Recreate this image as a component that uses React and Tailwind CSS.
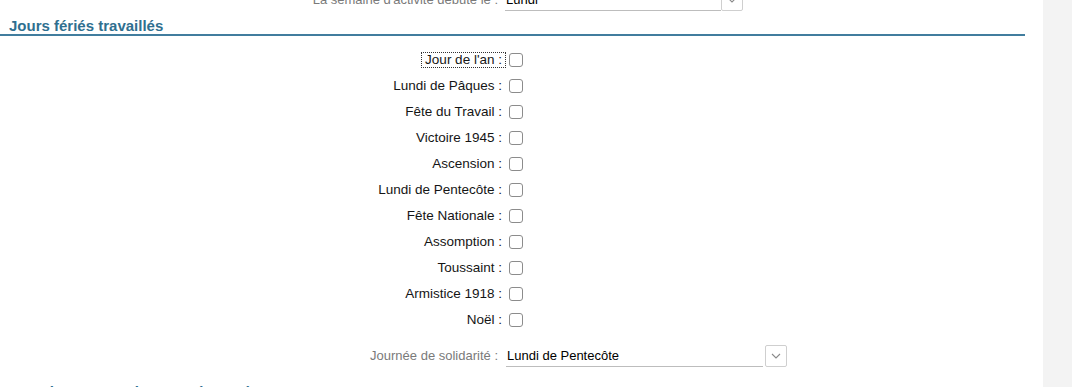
import React from 'react';

const font = { fontFamily: '"Liberation Sans", Arial, sans-serif' };

const holidays = [
  'Jour de l\'an',
  'Lundi de Pâques',
  'Fête du Travail',
  'Victoire 1945',
  'Ascension',
  'Lundi de Pentecôte',
  'Fête Nationale',
  'Assomption',
  'Toussaint',
  'Armistice 1918',
  'Noël',
];

// Chevron for the combo button
function Chevron() {
  return (
    <svg width="10" height="6" viewBox="0 0 10 6" fill="none">
      <path d="M1 1l4 4 4-4" stroke="#8a8a8a" strokeWidth="1.1" />
    </svg>
  );
}

// Select with underline + separate dropdown button
function ComboField({ value, width, gap }) {
  return (
    <div className="flex items-end">
      <div className={`${width} h-[21px] border-b border-[#bdbdbd] pl-[1px] text-[13px] leading-[20px] text-black`}>
        {value}
      </div>
      <div className={`${gap} w-[22px] h-[22px] border border-[#cfcfcf] rounded-[2px] bg-white flex items-center justify-center`}>
        <Chevron />
      </div>
    </div>
  );
}

function SectionTitle({ children }) {
  return (
    <div className="mr-[18px] border-b-2 border-[#417d9e]">
      <h2 className="pl-[9px] text-[15px] leading-[17px] font-bold text-[#2f6f90]">{children}</h2>
    </div>
  );
}

function HolidayRow({ label, focused }) {
  return (
    <div className="flex items-center h-[26px]">
      <div className="w-[506px] flex justify-end">
        <span
          className={`px-[3px] text-[13.5px] leading-[14px] text-[#151515] border ${
            focused ? 'border-dotted border-[#333]' : 'border-transparent'
          }`}
        >
          {label} :
        </span>
      </div>
      <span className="ml-[3px] w-[14px] h-[14px] rounded-[3px] border border-[#8c8c8c] bg-white" />
    </div>
  );
}

export default function App() {
  return (
    <div className="w-[1072px] h-[387px] overflow-hidden bg-white flex" style={font}>
      <main className="flex-1 flex flex-col">
        {/* Week start row, partially scrolled out */}
        <div className="flex items-center h-[22px] -mt-[11px]">
          <div className="w-[502px] text-right text-[13px] text-[#7a7a7a] pr-[4px]">
            La semaine d'activité débute le :
          </div>
          <div className="ml-[3px]">
            <ComboField value="Lundi" width="w-[216px]" gap="ml-0" />
          </div>
        </div>

        <div className="mt-[6px]">
          <SectionTitle>Jours fériés travaillés</SectionTitle>
        </div>

        <div className="mt-[11px] flex flex-col">
          {holidays.map((h, i) => (
            <HolidayRow key={h} label={h} focused={i === 0} />
          ))}
        </div>

        <div className="mt-[12px] flex items-center h-[22px]">
          <div className="w-[502px] text-right text-[13px] text-[#7a7a7a] pr-[4px]">
            Journée de solidarité :
          </div>
          <div className="ml-[4px]">
            <ComboField value="Lundi de Pentecôte" width="w-[257px]" gap="ml-[2px]" />
          </div>
        </div>

        <div className="mt-[16px]">
          <SectionTitle>Fonctionnement des congés payés</SectionTitle>
        </div>
      </main>

      {/* Right side panel */}
      <aside className="w-[29px] bg-[#f3f3f3]" />
    </div>
  );
}
